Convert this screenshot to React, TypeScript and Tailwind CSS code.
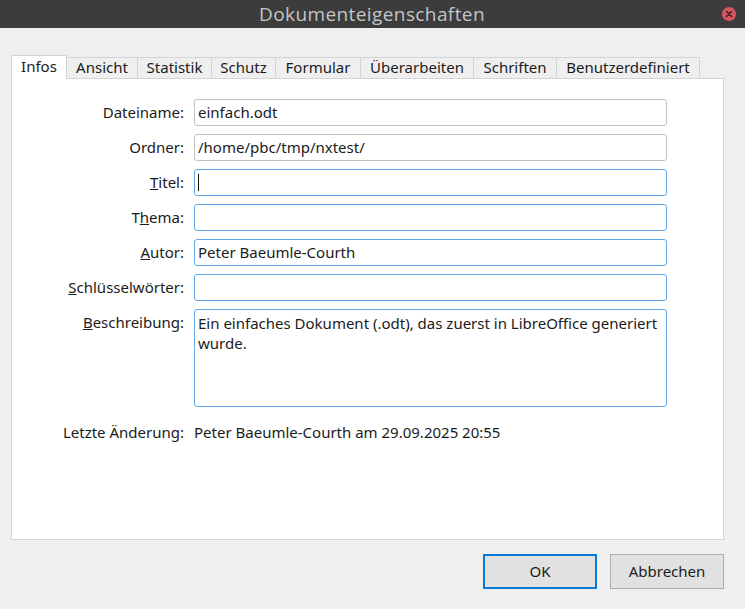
import React from "react";

const tabs: { label: string; w: string; active?: boolean }[] = [
  { label: "Infos", w: "w-[56px]", active: true },
  { label: "Ansicht", w: "w-[71px]" },
  { label: "Statistik", w: "w-[74px]" },
  { label: "Schutz", w: "w-[64px]" },
  { label: "Formular", w: "w-[85px]" },
  { label: "Überarbeiten", w: "w-[113px]" },
  { label: "Schriften", w: "w-[83px]" },
  { label: "Benutzerdefiniert", w: "w-[143px]" },
];

function Field({ value, blue, cursor }: { value?: string; blue?: boolean; cursor?: boolean }) {
  return (
    <div
      className={`h-[27px] rounded-[3px] border bg-white px-[3px] flex items-center ${
        blue ? "border-[#62a8ec]" : "border-[#c2c2c2]"
      }`}
    >
      {cursor && <span className="inline-block w-px h-[17px] bg-[#111]" />}
      {value && <span className="leading-none whitespace-nowrap">{value}</span>}
    </div>
  );
}

function Label({ children }: { children: React.ReactNode }) {
  return <div className="text-right whitespace-nowrap">{children}</div>;
}

export default function App() {
  return (
    <div
      className="w-[745px] h-[609px] bg-[#efefef] text-[#1b1b1b] text-[15px] flex flex-col overflow-hidden"
      style={{ fontFamily: '"Noto Sans", "Open Sans", sans-serif' }}
    >
      {/* Title bar */}
      <div className="h-[28px] bg-[#3c3c3c] flex items-center justify-center relative shrink-0">
        <span
          className="text-[#c4c4c4] text-[19px] leading-none tracking-[0.4px] ml-[-1px]"
          style={{ fontFamily: '"Open Sans", "Noto Sans", sans-serif' }}
        >
          Dokumenteigenschaften
        </span>
        <div className="absolute left-[722px] top-[7px] w-[14px] h-[14px] rounded-full bg-[#d9545c] flex items-center justify-center">
          <svg width="8" height="8" viewBox="0 0 8 8">
            <path d="M1.5 1.5 L6.5 6.5 M6.5 1.5 L1.5 6.5" stroke="#3a2224" strokeWidth="1.6" strokeLinecap="round" />
          </svg>
        </div>
      </div>

      <div className="pl-[11px] pr-[21px] pt-[27px] flex flex-col">
        {/* Tabs */}
        <div className="flex items-end h-[24px] -mb-px relative z-10">
          {tabs.map((t, i) =>
            t.active ? (
              <div
                key={t.label}
                className={`${t.w} h-[24px] bg-white border-l border-t border-r border-[#d4d4d4] flex items-center justify-center pb-[2px]`}
              >
                {t.label}
              </div>
            ) : (
              <div
                key={t.label}
                className={`${t.w} h-[22px] bg-[#efefef] border-t border-r border-b border-[#d4d4d4] flex items-center justify-center pb-[1px] ${
                  i === 0 ? "border-l" : ""
                }`}
              >
                {t.label}
              </div>
            )
          )}
        </div>

        {/* Panel */}
        <div className="h-[462px] bg-white border border-[#d4d4d4] pt-[20px]">
          <div className="grid grid-cols-[172px_473px] gap-x-[10px] gap-y-[8px] items-center">
            <Label>Dateiname:</Label>
            <Field value="einfach.odt" />

            <Label>Ordner:</Label>
            <Field value="/home/pbc/tmp/nxtest/" />

            <Label>
              <u>T</u>itel:
            </Label>
            <Field blue cursor />

            <Label>
              T<u>h</u>ema:
            </Label>
            <Field blue />

            <Label>
              <u>A</u>utor:
            </Label>
            <Field blue value="Peter Baeumle-Courth" />

            <Label>
              <u>S</u>chlüsselwörter:
            </Label>
            <Field blue />

            <div className="self-start text-right pt-[3px] leading-[20px]">
              <u>B</u>eschreibung:
            </div>
            <div className="h-[98px] rounded-[3px] border border-[#62a8ec] bg-white px-[3px] pt-[3px] leading-[20px]">
              Ein einfaches Dokument (.odt), das zuerst in LibreOffice generiert wurde.
            </div>

            <div className="text-right mt-[6px]">Letzte Änderung:</div>
            <div className="mt-[6px]">Peter Baeumle-Courth am 29.09.2025 20:55</div>
          </div>
        </div>

        {/* Buttons */}
        <div className="flex justify-end gap-[13px] mt-[14px]">
          <button className="w-[114px] h-[35px] bg-[#e1e1e1] border-2 border-[#0a78d7] flex items-center justify-center">
            OK
          </button>
          <button className="w-[114px] h-[35px] bg-[#e1e1e1] border border-[#adadad] flex items-center justify-center">
            Abbrechen
          </button>
        </div>
      </div>
    </div>
  );
}
